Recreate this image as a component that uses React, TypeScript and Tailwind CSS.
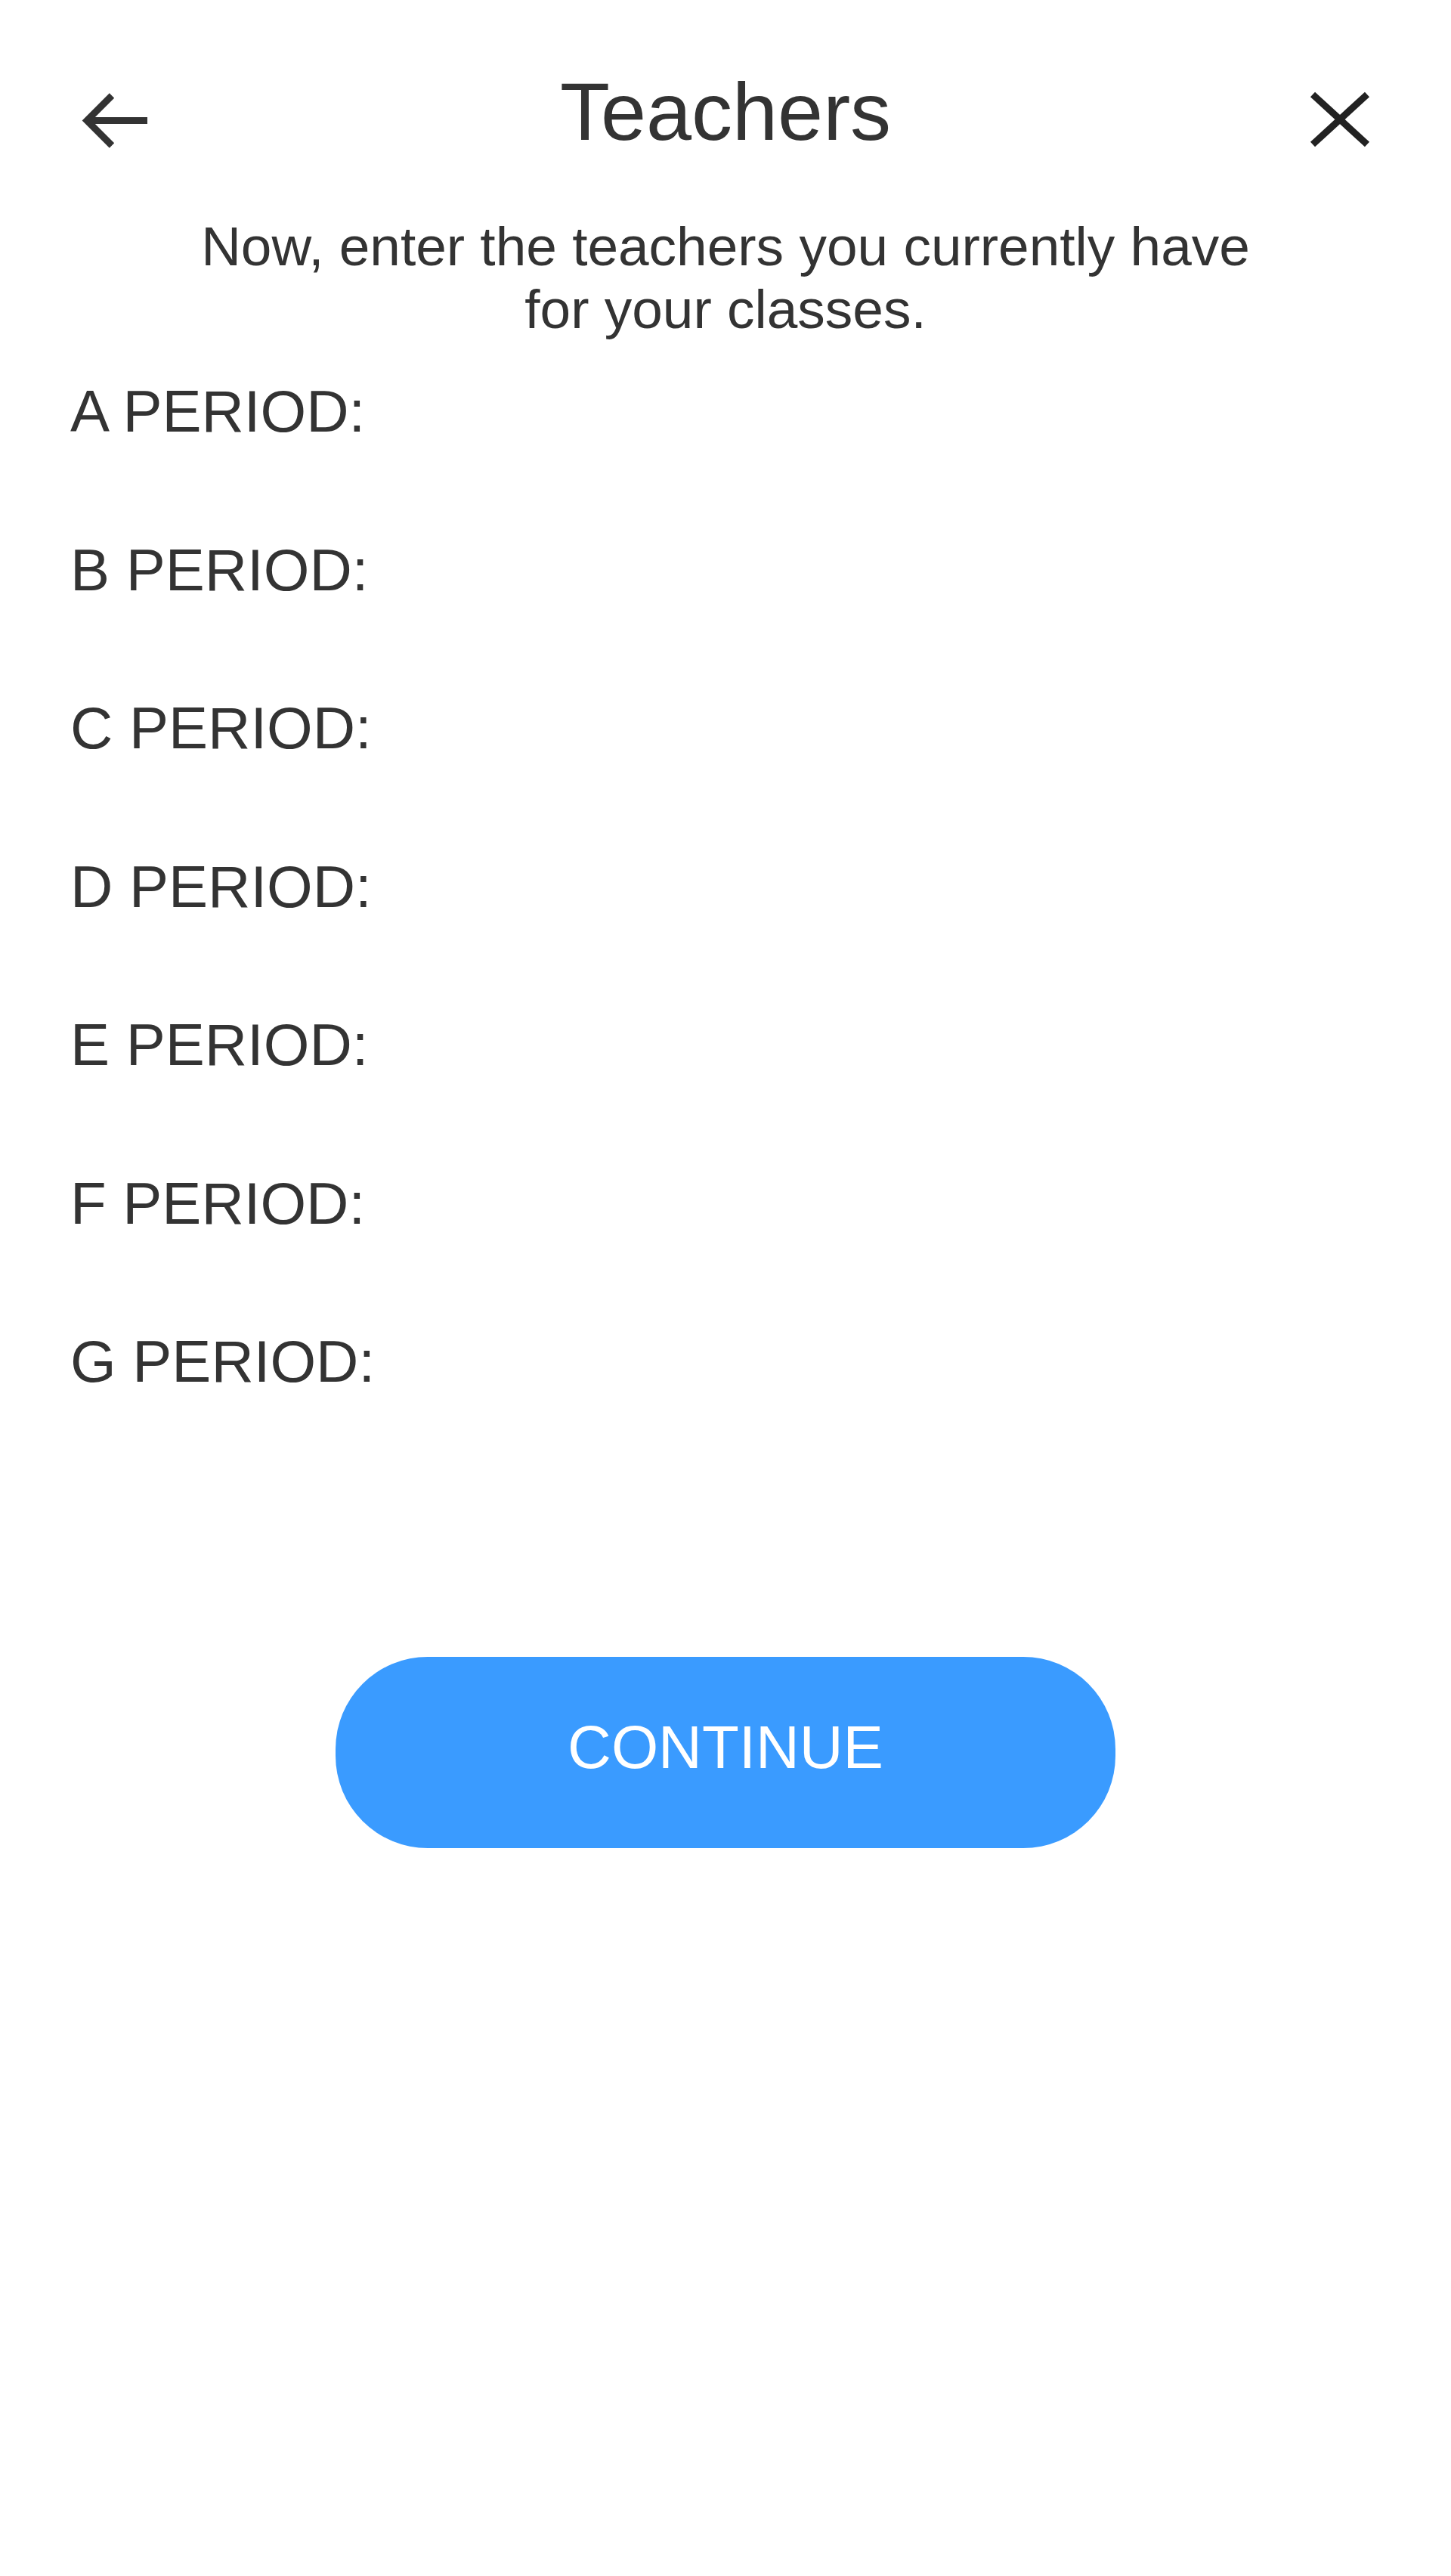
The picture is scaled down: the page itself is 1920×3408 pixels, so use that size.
import React from "react";

const periods = ["A", "B", "C", "D", "E", "F", "G"];

export default function App() {
  return (
    <div className="min-h-[3408px] w-full bg-white text-[#333333] font-['Liberation_Sans',Arial,sans-serif]">
      {/* Header */}
      <header className="grid grid-cols-[1fr_auto_1fr] px-[104px] pt-[94px]">
        <button className="justify-self-start mt-[24px]" aria-label="Back">
          <svg width="94" height="80" viewBox="0 0 94 80" fill="none">
            <path
              d="M44 6.5 L11 39.5 L44 72.5"
              stroke="#333333"
              strokeWidth="9"
              strokeLinecap="butt"
              strokeLinejoin="miter"
            />
            <path d="M11 39.5 H91" stroke="#333333" strokeWidth="9" />
          </svg>
        </button>
        <h1 className="text-[108px] leading-none font-normal text-center">Teachers</h1>
        <button className="justify-self-end mt-[20px]" aria-label="Close">
          <svg width="86" height="80" viewBox="0 0 86 80" fill="none">
            <path d="M7 7 L79 73 M79 7 L7 73" stroke="#222222" strokeWidth="9" strokeLinecap="butt" />
          </svg>
        </button>
      </header>

      {/* Subtitle */}
      <p className="mx-auto mt-[82px] max-w-[1440px] text-center text-[73px] leading-[83px]">
        Now, enter the teachers you currently have for your classes.
      </p>

      {/* Periods */}
      <div className="mt-[55px] flex flex-col gap-[131.5px] pl-[93px]">
        {periods.map((p) => (
          <div key={p} className="text-[78px] leading-none">
            {p} PERIOD:
          </div>
        ))}
      </div>

      {/* Continue */}
      <div className="mt-[352px] flex justify-center">
        <button className="flex h-[253px] w-[1032px] items-center justify-center rounded-[122px] bg-[#3A9BFF] pb-[13px] text-[80px] leading-none text-white">
          CONTINUE
        </button>
      </div>
    </div>
  );
}
